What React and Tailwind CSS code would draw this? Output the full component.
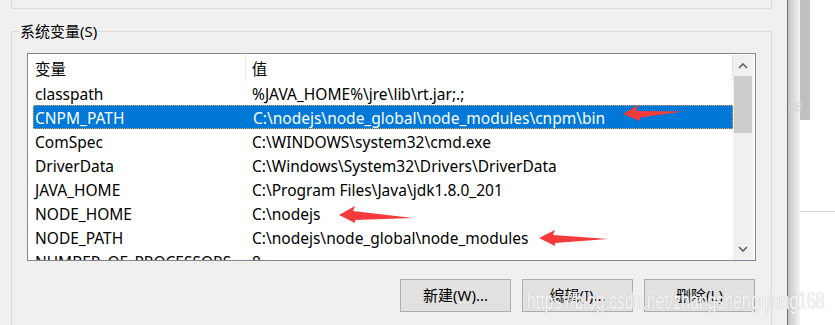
import React from 'react'

const rows = [
  ['classpath', '%JAVA_HOME%\\jre\\lib\\rt.jar;.;'],
  ['CNPM_PATH', 'C:\\nodejs\\node_global\\node_modules\\cnpm\\bin'],
  ['ComSpec', 'C:\\WINDOWS\\system32\\cmd.exe'],
  ['DriverData', 'C:\\Windows\\System32\\Drivers\\DriverData'],
  ['JAVA_HOME', 'C:\\Program Files\\Java\\jdk1.8.0_201'],
  ['NODE_HOME', 'C:\\nodejs'],
  ['NODE_PATH', 'C:\\nodejs\\node_global\\node_modules'],
  ['NUMBER_OF_PROCESSORS', '8'],
]

const Chevron = ({ down }) => (
  <svg width="10" height="6" viewBox="0 0 10 6" className={down ? 'rotate-180' : ''}>
    <path d="M1 5 L5 1 L9 5" fill="none" stroke="#606060" strokeWidth="1.6" />
  </svg>
)

const Btn = ({ children }) => (
  <button className="w-[111px] h-[33px] bg-[#e1e1e1] border border-[#adadad] text-[15px] text-black">
    {children}
  </button>
)

export default function App() {
  return (
    <div className="relative w-[835px] h-[325px] flex overflow-hidden font-['Noto_Sans','Noto_Sans_CJK_SC',sans-serif] text-black">
      {/* dialog */}
      <div className="w-[787px] shrink-0 bg-[#f0f0f0] pl-[11px] pr-[15px]">
        <div className="h-[9px] border-x border-b border-[#dcdcdc]" />

        <div className="relative mt-[22px] h-[400px] border border-[#dcdcdc] pt-[21px] pl-[15px] pr-[15px]">
          <span className="absolute -top-[11px] left-[7px] px-[1px] bg-[#f0f0f0] text-[15px] leading-[20px]">系统变量(S)</span>

          {/* list */}
          <div className="h-[208px] border border-[#828790] bg-white flex">
            <div className="w-[705px] pl-[5px] overflow-hidden text-[15.5px] leading-[20px]">
              <div className="h-[27px] flex items-end">
                <div className="w-[212px] h-[26px] pl-[2px] pt-[2px] flex items-center">变量</div>
                <div className="w-px h-[26px] bg-[#e5e5e5]" />
                <div className="w-[487px] h-[26px] pl-[6px] pt-[2px] flex items-center">值</div>
                <div className="w-px h-[26px] bg-[#e5e5e5]" />
              </div>
              {rows.map(([k, v], i) => (
                <div
                  key={k}
                  className={
                    i === 1
                      ? 'w-[700px] h-[24px] pt-[1px] flex items-center bg-[#0078d7] text-white border border-dotted border-[#e8a050]'
                      : 'w-[700px] h-[24px] pt-[2px] flex items-center'
                  }
                >
                  <div className={i === 1 ? 'w-[212px] pl-[1px] whitespace-nowrap' : 'w-[212px] pl-[2px] whitespace-nowrap'}>{k}</div>
                  <div className="pl-[7px] whitespace-nowrap">{v}</div>
                </div>
              ))}
            </div>
            {/* scrollbar */}
            <div className="w-[20px] mt-px bg-[#f0f0f0] flex flex-col">
              <div className="h-[21px] flex items-center justify-center">
                <Chevron />
              </div>
              <div className="mx-px h-[57px] bg-[#cdcdcd]" />
              <div className="flex-1" />
              <div className="h-[22px] flex items-center justify-center">
                <Chevron down />
              </div>
            </div>
          </div>

          <div className="mt-[18px] flex justify-end gap-[11px] pr-px">
            <Btn>新建(W)...</Btn>
            <Btn>编辑(I)...</Btn>
            <Btn>删除(L)</Btn>
          </div>
        </div>
      </div>

      <div className="w-px shrink-0 bg-[#6e6e6e]" />

      {/* behind window */}
      <div className="relative flex-1 bg-white flex flex-col">
        <div className="ml-[12px] w-[10px] h-[120px] bg-[#c0c0c0]" />
        <div className="h-[91px]" />
        <div className="h-px bg-[#d4d4d4]" />
        <div className="absolute inset-y-0 left-0 w-[12px] bg-linear-to-r from-[#c4c4c4] to-[#f4f4f4]" />
        <span className="absolute left-0 top-[97px] text-[13px] text-[#d6d6d6] font-['Liberation_Sans',sans-serif]">88</span>
      </div>

      {/* annotation arrows */}
      <svg className="absolute inset-0 pointer-events-none" width="835" height="325">
        <path d="M623 114 L638 105 L636 111 L684 111.5 L640 117.5 L640 121 Z" fill="#f43b3b" />
        <path d="M339 215 L355 206 L353 211 L413 218 L355 220 L355 223 Z" fill="#f43b3b" />
        <path d="M539 238 L555 230 L553 235 L608 239 L555 243 L555 246 Z" fill="#f43b3b" />
      </svg>

      {/* watermark */}
      <span className="absolute left-[527px] top-[286px] origin-left scale-x-[0.66] whitespace-nowrap text-[24px] leading-[30px] font-['Liberation_Sans',sans-serif] text-white/90 [text-shadow:0_0_1px_#a8a8a8]">
        https://blog.csdn.net/zhangshengqiang168
      </span>
    </div>
  )
}
